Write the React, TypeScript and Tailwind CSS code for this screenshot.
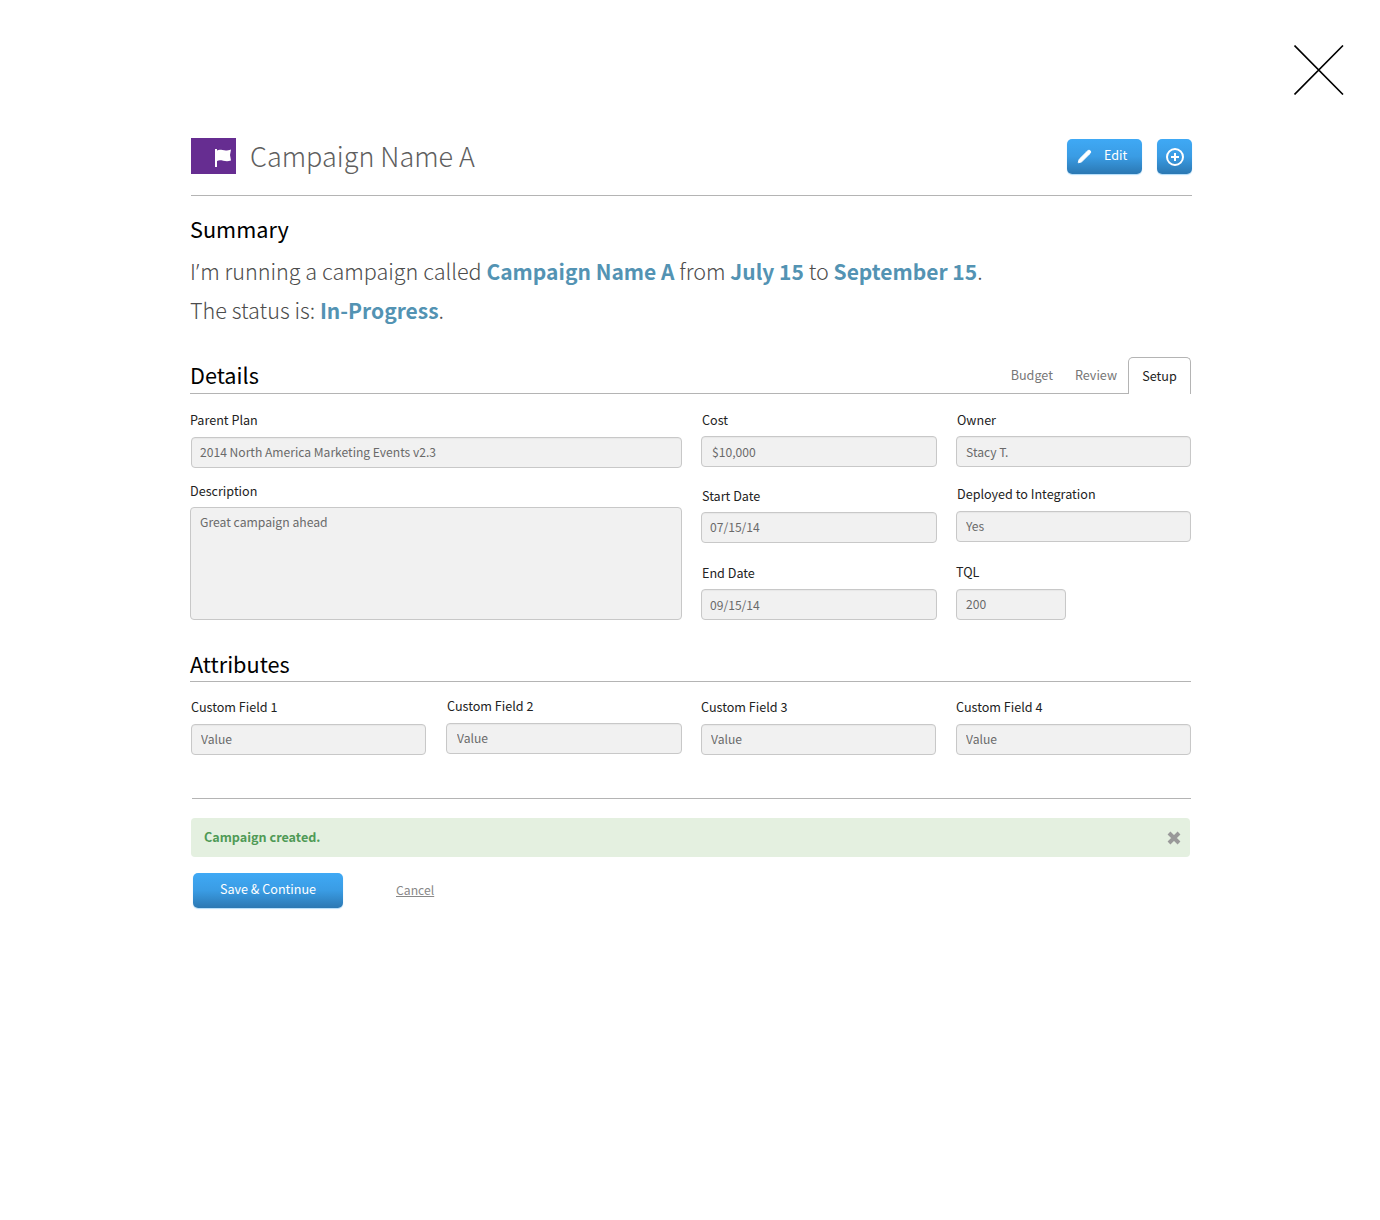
import { Pencil } from "lucide-react"

const inputCls =
  "block h-[31px] w-full rounded border border-[#c8c8c8] bg-[#f1f1f1] px-[9px] pb-[2px] text-[12.1px] text-[#6a6a6a] outline-none shadow-[inset_0_1px_1px_rgba(0,0,0,0.04)]"

const blueBtn = "bg-gradient-to-b from-[#3fa9f5] via-[#3a9ce4] to-[#2b78b3] shadow-[0_1px_1px_rgba(63,169,245,0.4)]"

function Field({ label, value, className = "", labelCls = "", inputClassName = "" }: { label: string; value: string; className?: string; labelCls?: string; inputClassName?: string }) {
  return (
    <div className={className}>
      <div className={`h-[20px] text-[12.6px] leading-[20px] text-[#222] ${labelCls}`}>{label}</div>
      <input readOnly value={value} className={`${inputCls} ${inputClassName}`} />
    </div>
  )
}

export default function App() {
  return (
    <div className="relative min-h-[1220px] bg-white font-['Noto_Sans_CJK_SC','Noto_Sans',sans-serif]">
      <svg className="absolute left-[1294px] top-[45px]" width="50" height="50" viewBox="0 0 50 50" fill="none" stroke="#000" strokeWidth="1.6">
        <path d="M0.5 0.5 49 49.5M49 0.5 0.5 49.5" />
      </svg>

      <div className="ml-[190px] w-[1002px] pt-[138px]">
        {/* header */}
        <div className="ml-px flex h-[58px] items-start border-b border-[#b4b4b4]">
          <div className="flex h-[36px] w-[45px] items-start justify-end bg-[#662d91] pr-[5px] pt-[11px]">
            <svg width="16" height="18" viewBox="0 0 16 18" fill="#fff">
              <rect x="0" y="0" width="2" height="18" />
              <path d="M2 1.500C6 -.5 9 3 16 .5L15 6l1 5.500C10 13.500 6 10 2 12z" />
            </svg>
          </div>
          <h1 className="ml-[14px] -mt-[1px] text-[27px] leading-[38px] font-light text-[#5f5f5f]">Campaign Name A</h1>
          <div className="ml-auto mt-[1px] flex gap-[15px]">
            <button className={`flex h-[35px] w-[75px] items-center rounded-[5px] pl-[10px] text-[12.6px] text-white ${blueBtn}`}>
              <Pencil className="h-[15px] w-[15px]" fill="#fff" strokeWidth={1.5} />
              <span className="ml-[12px] -mt-[3px]">Edit</span>
            </button>
            <button className={`flex h-[35px] w-[35px] items-center justify-center rounded-[5px] ${blueBtn}`}>
              <svg width="20" height="20" viewBox="0 0 20 20" fill="none" stroke="#fff" strokeWidth="2">
                <circle cx="10" cy="10" r="8" />
                <path d="M10 6v8M6 10h8" />
              </svg>
            </button>
          </div>
        </div>

        {/* summary */}
        <h2 className="mt-[17px] text-[21.7px] leading-[32px] text-black">Summary</h2>
        <p className="mt-[7px] text-[21.6px] leading-[38px] font-light text-[#4c4c4c]">
          I<span className="font-['Noto_Sans'] mr-px">’</span>m running a campaign called <b className="text-[21px] font-bold text-[#5393b3]">Campaign Name A</b> from <b className="text-[21px] font-bold text-[#5393b3]">July 15</b> to <b className="text-[21px] font-bold text-[#5393b3]">September 15</b>.
          <br />
          The status is: <b className="text-[21px] font-bold text-[#5393b3]">In-Progress</b>.
        </p>

        {/* details */}
        <div className="mt-[27px] flex h-[38px] w-[1001px] items-end border-b border-[#b4b4b4]">
          <h2 className="text-[21.7px] leading-[36px] text-black">Details</h2>
          <div className="ml-auto flex items-center text-[12.6px] text-[#777]">
            <span className="mr-[22px]">Budget</span>
            <span className="mr-[11px]">Review</span>
            <span className="-mb-px flex h-[37px] w-[63px] items-center justify-center rounded-t-[5px] border border-b-0 border-[#b4b4b4] bg-white text-[#222]">Setup</span>
          </div>
        </div>

        <div className="mt-[16px] flex items-start">
          <div className="w-[492px]">
            <Field label="Parent Plan" value="2014 North America Marketing Events v2.3" className="h-[71px]" inputClassName="ml-px w-[491px]! mt-[7px] pl-[8px]" />
            <div className="h-[20px] text-[12.6px] leading-[20px] text-[#222]">Description</div>
            <textarea readOnly value="Great campaign ahead" className="mt-[6px] block h-[113px] w-full resize-none rounded border border-[#c8c8c8] bg-[#f1f1f1] px-[9px] py-[4px] text-[12.2px] leading-[20px] text-[#6a6a6a] outline-none" />
          </div>
          <div className="ml-[19px] w-[236px]">
            <Field label="Cost" value="$10,000" labelCls="ml-px" inputClassName="mt-[6px] pl-[10px] pb-0!" className="h-[76px]" />
            <Field label="Start Date" value="07/15/14" labelCls="ml-px" inputClassName="mt-[6px] pl-[8px]" className="h-[77px]" />
            <Field label="End Date" value="09/15/14" labelCls="ml-px" inputClassName="mt-[6px] pl-[8px] pb-0!" />
          </div>
          <div className="ml-[19px] w-[235px]">
            <Field label="Owner" value="Stacy T." labelCls="ml-px" inputClassName="mt-[6px] pb-0!" className="h-[74px]" />
            <Field label="Deployed to Integration" value="Yes" labelCls="ml-px" inputClassName="mt-[7px]" className="h-[78px]" />
            <Field label="TQL" value="200" inputClassName="mt-[7px] w-[110px]!" />
          </div>
        </div>

        {/* attributes */}
        <h2 className="mt-[27px] h-[34px] text-[21.7px] leading-[34px] text-black">Attributes</h2>
        <div className="w-[1001px] border-b border-[#b4b4b4]" />
        <div className="mt-[15px] flex items-start">
          <Field label="Custom Field 1" value="Value" className="ml-px w-[235px]" inputClassName="mt-[7px]" />
          <Field label="Custom Field 2" value="Value" className="-mt-px ml-[21px] w-[235px]" inputClassName="mt-[7px] -ml-px w-[236px]! pl-[10px]" />
          <Field label="Custom Field 3" value="Value" className="ml-[19px] w-[235px]" inputClassName="mt-[7px]" />
          <Field label="Custom Field 4" value="Value" className="ml-[20px] w-[235px]" inputClassName="mt-[7px]" />
        </div>

        <div className="ml-[2px] mt-[43px] w-[999px] border-b border-[#b4b4b4]" />

        {/* alert */}
        <div className="ml-px mt-[19px] flex h-[39px] w-[999px] items-center justify-between rounded bg-[#e4f0e0] pl-[13px] pr-[9px]">
          <span className="text-[12.6px] font-bold text-[#4f9a56]">Campaign created.</span>
          <svg width="14" height="14" viewBox="0 0 14 14" stroke="#999" strokeWidth="4">
            <path d="M2 2 12 12M12 2 2 12" />
          </svg>
        </div>

        {/* actions */}
        <div className="ml-[3px] mt-[16px] flex items-center">
          <button className={`h-[35px] w-[150px] rounded-[5px] pb-[2px] text-[12.6px] text-white ${blueBtn}`}>Save &amp; Continue</button>
          <a className="ml-[53px] text-[12.2px] text-[#888] underline">Cancel</a>
        </div>
      </div>
    </div>
  )
}
